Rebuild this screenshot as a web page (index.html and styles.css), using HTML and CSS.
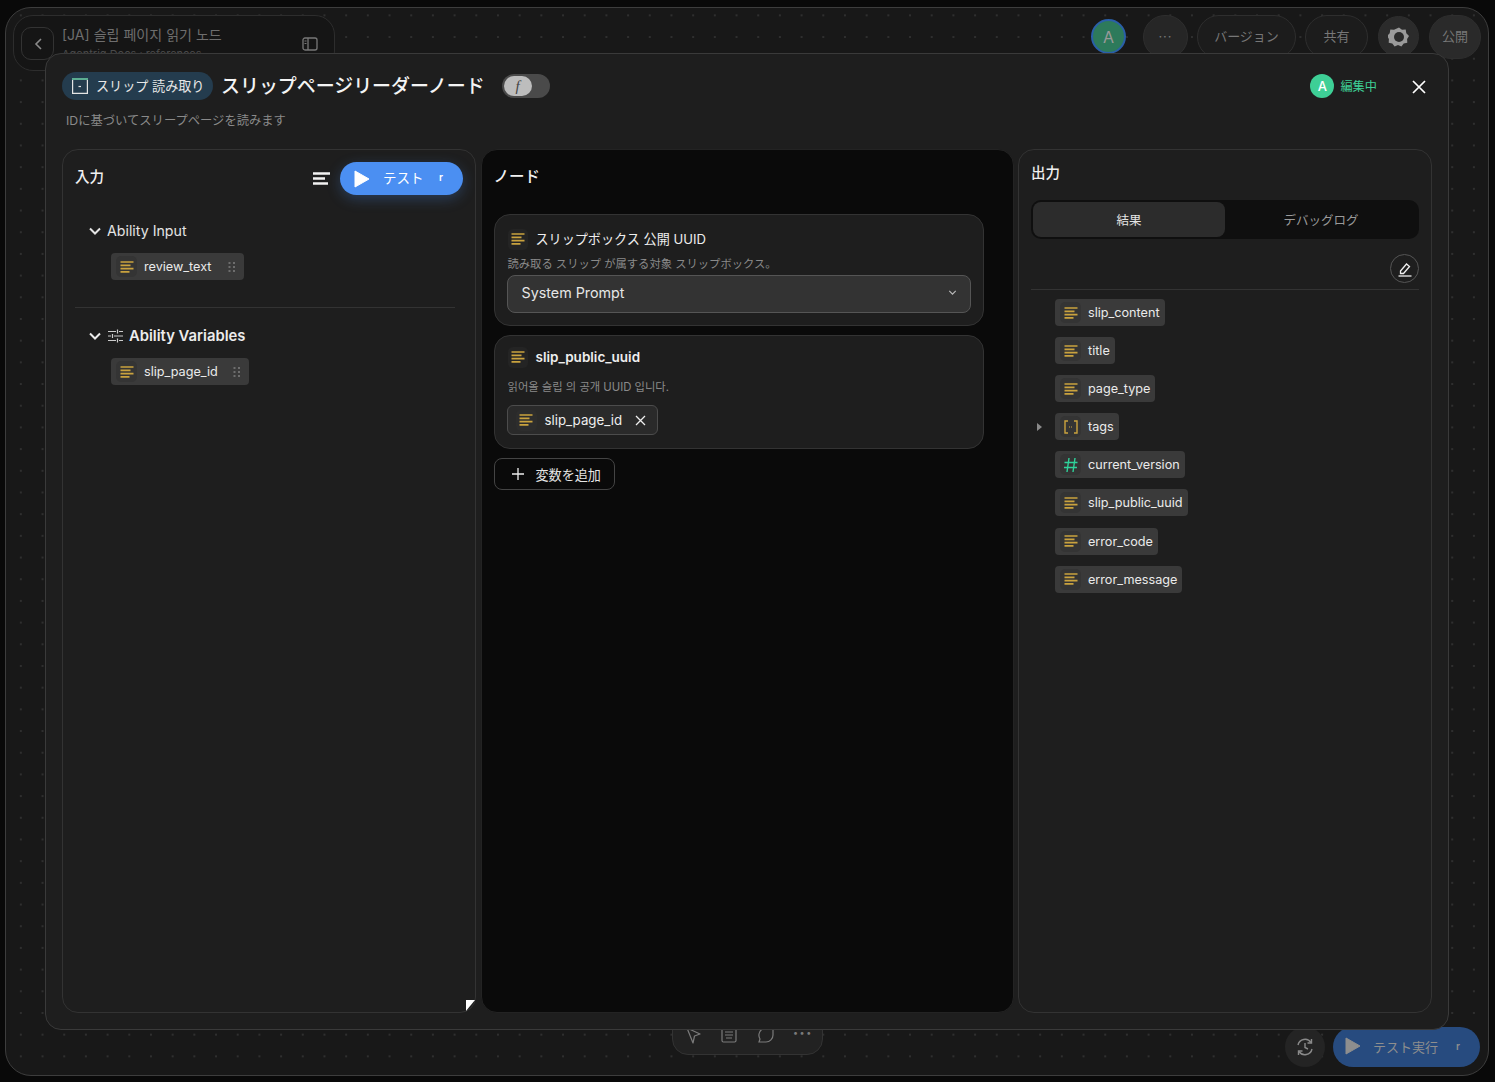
FILE: index.html
```html
<!DOCTYPE html>
<html lang="ja">
<head>
<meta charset="utf-8">
<title>スリップページリーダーノード</title>
<link rel="stylesheet" href="styles.css">
</head>
<body>
<svg class="defs" width="0" height="0" aria-hidden="true">
  <symbol id="txt" viewBox="0 0 16 16"><path d="M1.5 3h13M1.5 6.300h10M1.5 9.600h13M1.5 12.900h9" fill="none" stroke="currentColor" stroke-width="1.700"/></symbol>
  <symbol id="grip" viewBox="0 0 8 12"><g fill="currentColor"><rect x="0.5" y="1" width="2" height="2"/><rect x="5" y="1" width="2" height="2"/><rect x="0.5" y="5" width="2" height="2"/><rect x="5" y="5" width="2" height="2"/><rect x="0.5" y="9" width="2" height="2"/><rect x="5" y="9" width="2" height="2"/></g></symbol>
  <symbol id="chev" viewBox="0 0 14 14"><path d="M2 4.500l5 5 5-5" fill="none" stroke="currentColor" stroke-width="2"/></symbol>
  <symbol id="play" viewBox="0 0 16 18"><path d="M1 1l14 8-14 8z" fill="currentColor" stroke="currentColor" stroke-linejoin="round"/></symbol>
</svg>

<main class="canvas">
  <div class="topbar">
    <div class="doc-card">
      <button class="back"><svg width="10" height="14" viewBox="0 0 10 14"><path d="M8 2L3 7l5 5" fill="none" stroke="currentColor" stroke-width="1.600"/></svg></button>
      <div class="doc-text">
        <div class="doc-title">[JA] 슬립 페이지 읽기 노드</div>
        <div class="doc-sub">Agentrig Docs : references</div>
      </div>
      <svg class="doc-panel" width="16" height="14" viewBox="0 0 16 14"><rect x="1" y="1" width="14" height="12" rx="2" fill="none" stroke="currentColor" stroke-width="1.300"/><path d="M6 1v12" stroke="currentColor" stroke-width="1.300"/><path d="M2.500 4h2M2.500 6.500h2" stroke="currentColor"/></svg>
    </div>
    <div class="top-actions">
      <div class="avatar-big">A</div>
      <div class="top-round dots">···</div>
      <div class="top-pill pill-version">バージョン</div>
      <div class="top-pill pill-share">共有</div>
      <div class="top-round gear"><svg width="22" height="22" viewBox="0 0 22 22"><path d="M11 1.500l3 2.300 3.700-.2.600 3.700 2.700 2.600-1.900 3.200.2 3.700-3.600.7-2.300 3-3.400-1.500-3.400 1.500-2.300-3-3.600-.7.200-3.700-1.900-3.200 2.700-2.600.6-3.700 3.700.2z" fill="#9a9a9a"/><circle cx="11" cy="11" r="5" fill="#2a2a2a"/></svg></div>
      <div class="top-pill pill-publish">公開</div>
    </div>
  </div>

  <div class="bottombar">
    <div class="tools">
      <svg class="tool" width="16" height="18" viewBox="0 0 16 18"><path d="M2 1l13 6-5.500 2-1.500 7z" fill="none" stroke="currentColor" stroke-width="1.200" stroke-linejoin="round"/></svg>
      <svg class="tool" width="16" height="16" viewBox="0 0 16 16"><rect x="1" y="1" width="14" height="14" rx="1.500" fill="none" stroke="currentColor" stroke-width="1.200"/><path d="M4 5h8M4 8h8M5 11h6" stroke="currentColor"/></svg>
      <svg class="tool" width="18" height="16" viewBox="0 0 18 16"><path d="M2 7a7 7 0 0 1 7-6h7v7a7 7 0 0 1-7 7H2l1-3a7 7 0 0 1-1-5z" fill="none" stroke="currentColor" stroke-width="1.200"/></svg>
      <span class="tool-dots">•••</span>
    </div>
    <div class="run-group">
      <div class="history"><svg width="20" height="20" viewBox="0 0 20 20"><path d="M3 8a7.200 7.200 0 0 1 13-2.500M17 12a7.200 7.200 0 0 1-13 2.500" fill="none" stroke="currentColor" stroke-width="1.400"/><path d="M16.500 2v4h-4M3.500 18v-4h4M10 6v4.500l3 1.500" fill="none" stroke="currentColor" stroke-width="1.400"/></svg></div>
      <button class="run-btn"><svg width="16" height="18"><use href="#play"/></svg><span class="run-label">テスト実行</span><span class="key">r</span></button>
    </div>
  </div>

  <section class="modal">
    <header class="modal-head">
      <div class="modal-title-row">
        <span class="badge"><svg width="18" height="18" viewBox="0 0 18 18"><path d="M1 2h16" stroke="#6fd3a8" stroke-width="1.500"/><path d="M1.600 3v13.400h14.800V3" fill="none" stroke="#e4e4e4" stroke-width="1.200"/><path d="M7.500 9.500h2.500" stroke="#e4e4e4" stroke-width="1.200"/></svg><span class="badge-text">スリップ 読み取り</span></span>
        <h1>スリップページリーダーノード</h1>
        <span class="toggle"><span class="knob">f</span></span>
      </div>
      <div class="editing">
        <span class="avatar-small">A</span>
        <span class="editing-text">編集中</span>
        <svg class="close" width="14" height="14" viewBox="0 0 14 14"><path d="M1 1l12 12M13 1L1 13" stroke="#fff" stroke-width="1.700"/></svg>
      </div>
    </header>
    <p class="modal-desc">IDに基づいてスリープページを読みます</p>

    <div class="panels">
      <div class="panel panel-input">
        <div class="panel-head input-head">
          <h2>入力</h2>
          <svg class="align" width="17" height="13" viewBox="0 0 17 13"><path d="M0 1.500h17M0 6.500h12M0 11.500h15" stroke="#f2f2f2" stroke-width="2.400"/></svg>
          <button class="test-btn"><svg width="16" height="18"><use href="#play"/></svg><span class="test-label">テスト</span><span class="key key-up">r</span></button>
        </div>
        <div class="group group-first">
          <div class="group-title"><svg width="14" height="14"><use href="#chev"/></svg>Ability Input</div>
          <div class="chip chip-left"><span class="ico"><svg width="16" height="16"><use href="#txt"/></svg></span>review_text<svg class="grip grip-wide" width="8" height="12"><use href="#grip"/></svg></div>
        </div>
        <hr class="rule">
        <div class="group">
          <div class="group-title strong"><svg width="14" height="14"><use href="#chev"/></svg><svg class="sliders" width="15" height="14" viewBox="0 0 15 14"><path d="M0 2.500h8M11 2.500h4M0 7h3M6 7h9M0 11.500h8M11 11.500h4M9.500 .5v4M4.500 5v4M9.500 9.500v4" stroke="currentColor" stroke-width="1.200"/></svg>Ability Variables</div>
          <div class="chip chip-left"><span class="ico"><svg width="16" height="16"><use href="#txt"/></svg></span>slip_page_id<svg class="grip" width="8" height="12"><use href="#grip"/></svg></div>
        </div>
        <svg class="corner" width="9" height="11" viewBox="0 0 9 11"><path d="M0 0h9L0 11z" fill="#fff"/></svg>
      </div>

      <div class="panel panel-node">
        <h2 class="node-title">ノード</h2>
        <div class="field">
          <div class="field-head"><span class="ico ico-field"><svg width="16" height="16"><use href="#txt"/></svg></span>スリップボックス 公開 UUID</div>
          <div class="field-desc">読み取る スリップ が属する対象 スリップボックス。</div>
          <div class="select"><span class="select-text">System Prompt</span><svg width="9" height="9" viewBox="0 0 14 14"><path d="M2 4.500l5 5 5-5" fill="none" stroke="#bbb" stroke-width="1.800"/></svg></div>
        </div>
        <div class="field field-var">
          <div class="field-head strong"><span class="ico ico-field"><svg width="16" height="16"><use href="#txt"/></svg></span>slip_public_uuid</div>
          <div class="field-desc desc-gap">읽어올 슬립 의 공개 UUID 입니다.</div>
          <div class="tag"><span class="ico ico-tag"><svg width="16" height="16"><use href="#txt"/></svg></span>slip_page_id<svg class="tag-x" width="11" height="11" viewBox="0 0 11 11"><path d="M1 1l9 9M10 1l-9 9" stroke="#eee" stroke-width="1.300"/></svg></div>
        </div>
        <button class="add-btn"><svg width="12" height="12" viewBox="0 0 12 12"><path d="M6 0v12M0 6h12" stroke="#eee" stroke-width="1.300"/></svg>変数を追加</button>
      </div>

      <div class="panel panel-output">
        <h2>出力</h2>
        <div class="tabs"><span class="tab active">結果</span><span class="tab">デバッグログ</span></div>
        <div class="tool-row"><span class="edit-btn"><svg width="16" height="16" viewBox="0 0 16 16"><path d="M3.500 10L9.500 3l3 2.500-6 7H3.500z" fill="none" stroke="#eee" stroke-width="1.300"/><path d="M1.500 15h13" stroke="#eee" stroke-width="1.300"/></svg></span></div>
        <ul class="outputs">
          <li><span class="chip"><span class="ico"><svg width="16" height="16"><use href="#txt"/></svg></span>slip_content</span></li>
          <li><span class="chip"><span class="ico"><svg width="16" height="16"><use href="#txt"/></svg></span>title</span></li>
          <li><span class="chip"><span class="ico"><svg width="16" height="16"><use href="#txt"/></svg></span>page_type</span></li>
          <li class="expandable"><span class="chip"><span class="ico"><svg width="16" height="16" viewBox="0 0 16 16"><path d="M5 2H2v12h3M11 2h3v12h-3" fill="none" stroke="#c9a23e" stroke-width="1.400"/><path d="M6 8h4" stroke="#c9a23e" stroke-dasharray="1 1"/></svg></span>tags</span></li>
          <li><span class="chip"><span class="ico"><svg width="16" height="16" viewBox="0 0 16 16"><path d="M6 1L4 15M12 1l-2 14M1.500 5.500h13M1 10.500h13" stroke="#2fd29a" stroke-width="1.400"/></svg></span>current_version</span></li>
          <li><span class="chip"><span class="ico"><svg width="16" height="16"><use href="#txt"/></svg></span>slip_public_uuid</span></li>
          <li><span class="chip"><span class="ico"><svg width="16" height="16"><use href="#txt"/></svg></span>error_code</span></li>
          <li><span class="chip"><span class="ico"><svg width="16" height="16"><use href="#txt"/></svg></span>error_message</span></li>
        </ul>
      </div>
    </div>
  </section>
</main>
</body>
</html>
```
FILE: styles.css
```css
* { box-sizing: border-box; }
html, body { height: 100%; }
body {
  margin: 0;
  background: #090909;
  color: #f0f0f0;
  font-family: Inter, "Noto Sans CJK JP", "Noto Sans CJK KR", sans-serif;
  padding: 7px 6px 6px 5px;
  overflow: hidden;
}
.defs { position: absolute; }
h1, h2, p, ul { margin: 0; padding: 0; }
button { font: inherit; color: inherit; border: 0; background: none; padding: 0; }

.canvas {
  position: relative;
  height: 1069px;
  border: 1px solid #3d3d3d;
  border-radius: 26px;
  background-color: #181818;
  background-image: radial-gradient(circle, #2f2f2f 0.7px, transparent 1px);
  background-size: 21.7px 21.7px;
  background-position: 4px -3.5px;
  padding: 7px 7px 8px 7px;
  display: flex;
  flex-direction: column;
  justify-content: space-between;
}

.topbar { display: flex; justify-content: space-between; align-items: flex-start; }
.doc-card {
  width: 322px; height: 56px;
  border: 1px solid #2d2d2d; border-radius: 20px;
  background: #151515;
  padding: 11px 16px 0 7px;
  display: flex; gap: 8px; color: #707070;
}
.back {
  width: 33px; height: 33px;
  border: 1px solid #333; border-radius: 10px; color: #8a8a8a;
  display: flex; align-items: center; justify-content: center;
}
.doc-text { flex: 1; overflow: hidden; }
.doc-title { font-size: 14.050px; line-height: 17px; margin-top: -1px; color: #6e6e6e; }
.doc-sub { font-size: 11px; line-height: 14px; margin-top: 4px; color: #4a4a4a; }
.doc-panel { margin-top: 10px; color: #777; }

.top-actions { display: flex; align-items: flex-start; gap: 9px; color: #777; font-size: 13px; }
.avatar-big {
  width: 35px; height: 35px; margin: 4px 8px 0 0;
  border-radius: 50%; border: 2px solid #2a5fa8; background: #2d7a5b; color: #999;
  display: flex; align-items: center; justify-content: center; font-size: 16px;
}
.top-round, .top-pill {
  height: 44px; padding-bottom: 3px; border: 1px solid #2e2e2e; border-radius: 23px; background: #1c1c1c;
  display: flex; align-items: center; justify-content: center;
}
.dots { width: 45px; background: #262626; letter-spacing: 1px; }
.pill-version { width: 99px; }
.pill-share { width: 63px; margin-right: 1px; }
.gear { width: 41px; height: 41px; margin: 1px 1px 0 0; padding: 0; background: #2b2b2b; }
.pill-publish { width: 52px; background: #2a2a2a; }

.bottombar { display: flex; justify-content: flex-end; align-items: flex-end; position: relative; }
.tools {
  position: absolute; left: 659px; bottom: 12px;
  width: 151px; height: 48px; padding: 12px 12px 0 12px;
  display: flex; gap: 20px; align-items: flex-start;
  background: #222; border: 1px solid #333; border-radius: 16px; color: #7b7b7b;
}
.tool { flex: none; margin-top: 7px; }
.tool-dots { font-size: 9px; letter-spacing: 1.500px; margin-top: 7px; margin-left: -2px; }
.run-group { display: flex; align-items: center; gap: 8px; }
.history {
  width: 40px; height: 40px; border-radius: 50%; background: #242424; color: #8a8a8a;
  display: flex; align-items: center; justify-content: center;
}
.run-btn {
  width: 147px; height: 40px; padding: 0 20px 2px 12px; margin-right: 1px;
  border-radius: 20px; background: #274b7f; color: #8e8e8e;
  display: flex; align-items: center; font-size: 13px;
}
.run-label { margin-left: 12px; flex: 1; text-align: left; }
.key { font-size: 10px; font-weight: 600; }
.key-up { margin-top: -3px; }

.modal {
  position: absolute; left: 39px; top: 45px; width: 1404px; height: 977px;
  background: #1e1e1e; border: 1px solid #3a3a3a; border-radius: 16px;
  padding: 18px 16px 16px 16px;
  display: flex; flex-direction: column;
}
.modal-head { display: flex; justify-content: space-between; align-items: center; height: 28px; }
.modal-title-row { display: flex; align-items: center; }
.badge {
  height: 28px; width: 151px; border-radius: 14px; background: #243c4e;
  display: flex; align-items: center; gap: 7px; padding-left: 9px;
  font-size: 13.100px; color: #e8e8e8; white-space: nowrap;
}
.badge-text { margin-top: -2px; }
h1 { font-size: 18.950px; font-weight: 500; margin: 2px 0 0 8px; line-height: 28px; color: #f4f4f4; }
.toggle {
  width: 48px; height: 24px; border-radius: 12px; background: #4a4a4a; margin-left: 17px;
  display: flex; align-items: center; padding-left: 2px;
}
.knob {
  width: 28px; height: 20px; border-radius: 10px; background: #bdbdbd; color: #444;
  font: italic 15px/20px "Liberation Serif", serif; text-align: center;
}
.editing { display: flex; align-items: center; margin-right: 6px; padding-top: 1px; }
.avatar-small {
  width: 24px; height: 24px; border-radius: 50%; background: #3ecf96; color: #fff;
  display: flex; align-items: center; justify-content: center; font-size: 13px; font-weight: 500;
  margin-top: -1px;
}
.editing-text { color: #3ecf96; font-size: 12.200px; margin-left: 6px; margin-top: -1px; }
.close { margin-left: 35px; }
.modal-desc { font-size: 12.300px; line-height: 16px; color: #8a8a8a; margin: 13px 0 20px 4px; }

.panels { flex: 1; display: grid; grid-template-columns: 414px 533px 414px; column-gap: 4.500px; min-height: 0; }
.panel { border: 1px solid #333; border-radius: 16px; background: #1e1e1e; position: relative; }
h2 { font-size: 14.500px; font-weight: 500; line-height: 20px; }

.panel-input { padding: 12px 12px 0 12px; }
.input-head { display: flex; align-items: center; height: 33px; }
.input-head h2 { flex: 1; margin-top: -3px; }
.align { margin-right: 10px; }
.test-btn {
  width: 123px; height: 33px; border-radius: 17px; background: #4b8ff2; color: #fff;
  box-shadow: 0 4px 14px rgba(75, 143, 242, .28);
  display: flex; align-items: center; padding: 0 20px 0 14px; font-size: 13.500px;
}
.test-label { flex: 1; text-align: left; margin-left: 13px; margin-top: -4px; }
.group { padding-left: 14px; padding-right: 8px; }
.group-first { margin-top: 26px; }
.group-title {
  display: flex; align-items: center; gap: 5px; font-size: 14.200px; line-height: 20px; color: #e4e4e4;
  margin-bottom: 12px; margin-left: -1px;
}
.group-title.strong { font-size: 14.800px; font-weight: 600; color: #ececec; }
.sliders { margin: 0 1px 0 1px; color: #ccc; }
.rule { border: 0; border-top: 1px solid #333; margin: 27px 8px 18px 0; }

.chip {
  display: inline-flex; align-items: center; height: 27px; padding: 0 5px;
  background: #3a3a3a; border-radius: 4px; font-size: 12.650px; color: #eaeaea;
}
.chip-left { margin-left: 22px; padding-right: 8px; }
.grip { color: #6d6d6d; margin-left: 15px; }
.grip-wide { margin-left: 17px; }
.ico {
  width: 21px; height: 21px; border-radius: 5px; background: #343434; color: #c9a23e;
  display: inline-flex; align-items: center; justify-content: center; margin-right: 7px; flex: none;
}

.panel-node { background: #0a0a0a; border-color: #232323; padding: 17px 29px 0 12px; }
.node-title { font-size: 15.500px; margin-bottom: 27px; }
.field {
  border: 1px solid #333; border-radius: 16px; background: #1e1e1e;
  padding: 13px 12px 12px 12px; height: 112px; margin-bottom: 9px;
}
.field-var { height: 114px; padding-top: 10px; }
.field-head { display: flex; align-items: center; font-size: 13.100px; line-height: 22px; color: #eee; margin-left: 1px; }
.field-head.strong { font-size: 13.500px; font-weight: 600; }
.ico-field { background: #242424; width: 20px; height: 21px; margin-right: 8px; }
.field-desc { font-size: 11.300px; line-height: 16px; color: #8a8a8a; margin: 6px 0 3px 1px; }
.desc-gap { margin-top: 11px; margin-bottom: 10px; }
.select {
  height: 38px; border: 1px solid #555; border-radius: 8px; background: #333;
  display: flex; align-items: center; justify-content: space-between;
  padding: 0 13px 3px 14px; font-size: 14.300px; color: #e6e6e6;
}
.tag {
  display: inline-flex; align-items: center; height: 30px; padding: 0 11px 0 8px;
  border: 1px solid #4c4c4c; border-radius: 6px; background: #2a2a2a; font-size: 13.300px; color: #eee;
}
.tag-x { margin-left: 13px; }
.ico-tag { background: #2d2d2d; margin-right: 8px; }
.add-btn {
  display: flex; align-items: center; gap: 12px; height: 32px; width: 121px; padding-left: 17px;
  border: 1px solid #444; border-radius: 8px; font-size: 13.100px; color: #e6e6e6; background: #0a0a0a;
}

.panel-output { padding: 13px 12px 0 12px; }
.tabs {
  display: flex; height: 39px; margin-top: 17px; padding: 2px; border-radius: 10px; background: #0f0f0f;
  font-size: 12.500px; color: #9a9a9a;
}
.tab { flex: 1; display: flex; align-items: center; justify-content: center; border-radius: 8px; }
.tab.active { background: #2c2c2c; color: #e4e4e4; }
.tool-row { display: flex; justify-content: flex-end; padding: 15px 0 6px; border-bottom: 1px solid #333; }
.edit-btn {
  width: 29px; height: 29px; border: 1px solid #555; border-radius: 50%;
  display: flex; align-items: center; justify-content: center;
}
.outputs { list-style: none; padding: 9px 0 0 24px; display: flex; flex-direction: column; gap: 11.100px; align-items: flex-start; }
.outputs li { display: flex; position: relative; }
.expandable::before {
  content: ""; position: absolute; left: -18px; top: 10px;
  border-left: 5px solid #8a8a8a; border-top: 4px solid transparent; border-bottom: 4px solid transparent;
}
.corner { position: absolute; right: 0; bottom: 1px; }
```
